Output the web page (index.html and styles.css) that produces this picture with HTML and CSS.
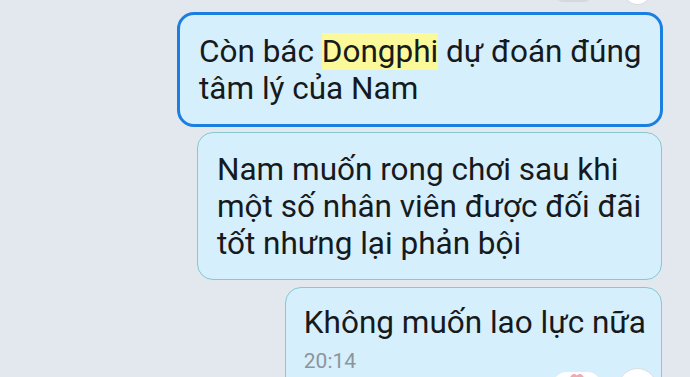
FILE: index.html
```html
<!DOCTYPE html>
<html lang="vi">
<head>
    <meta charset="UTF-8">
    <meta name="viewport" content="width=device-width, initial-scale=1.0">
    <title>Chat</title>
    <link rel="stylesheet" href="styles.css">
</head>
<body>
    <div class="chat">
        <div class="prev-reactions">
            <span class="react-pill react-pill--grey"></span>
            <span class="react-circle"></span>
        </div>

        <div class="bubble bubble--selected">
            <p class="bubble-text">Còn bác <mark class="hl">Dongphi</mark> dự đoán đúng tâm lý của Nam</p>
        </div>

        <div class="bubble bubble--mid">
            <p class="bubble-text">Nam muốn rong chơi sau khi một số nhân viên được đối đãi tốt nhưng lại phản bội</p>
        </div>

        <div class="bubble bubble--last">
            <p class="bubble-text">Không muốn lao lực nữa</p>
            <span class="bubble-time">20:14</span>
            <div class="reactions">
                <span class="react-pill">
                    <svg class="heart" width="14" height="12" viewBox="0 0 14 12"><path d="M7 12 L1.2 6.2 A3.4 3.4 0 0 1 7 1.6 A3.4 3.4 0 0 1 12.8 6.2 Z" fill="#f2a7b1"/></svg>
                </span>
                <span class="react-circle">
                    <svg class="more" width="14" height="8" viewBox="0 0 14 8"><rect x="1" y="2" width="3" height="6" rx="1" fill="#4a4f55"/><rect x="10" y="2" width="3" height="6" rx="1" fill="#4a4f55"/></svg>
                </span>
            </div>
        </div>
    </div>
</body>
</html>
```

FILE: styles.css
```css
* {
    margin: 0;
    padding: 0;
    box-sizing: border-box;
    font-family: Roboto, 'Noto Sans', sans-serif;
}

:root {
    --bg: #e3e7ee;
    --bubble: #d6effc;
    --bubble-border: #86c8cc;
    --selected: #1b7fe2;
    --text: #161a1d;
}

body {
    background: var(--bg);
    color: var(--text);
    height: 377px;
    overflow: hidden;
}

.chat {
    position: relative;
    display: flex;
    flex-direction: column;
    align-items: flex-end;
    padding: 12px 27px 0 0;
}

.prev-reactions {
    position: absolute;
    top: -14px;
    right: 38px;
    display: flex;
    gap: 31px;
    align-items: flex-start;
}

.react-pill {
    display: flex;
    justify-content: center;
    width: 50px;
    height: 30px;
    border-radius: 15px;
    background: #fff;
}

.react-pill--grey {
    width: 37px;
    height: 16px;
    background: #d5d9de;
}

.react-circle {
    display: flex;
    justify-content: center;
    width: 39px;
    height: 39px;
    border-radius: 50%;
    background: #fff;
    border: 1px solid #d9dde2;
}

.prev-reactions .react-circle {
    width: 29px;
    height: 19px;
    border-radius: 0 0 15px 15px;
    border-top: none;
}

.bubble {
    position: relative;
    background: var(--bubble);
    border: 1px solid var(--bubble-border);
    border-radius: 16px;
    padding: 18px 19px 17px 19px;
}

.bubble--selected {
    width: 486px;
    border: 3px solid var(--selected);
    border-radius: 17px;
    padding: 18px 10px 17px 19px;
}

.bubble--mid {
    width: 465px;
    margin: 5px 1px 0 0;
    padding: 18px 12px 17px 19px;
}

.bubble--last {
    margin: 7px 1px 0 0;
    padding: 16px 15px 24px 18px;
}

.bubble-text {
    font-size: 31.5px;
    line-height: 37px;
}

.hl {
    background: #fbf99a;
    color: inherit;
}

.bubble-time {
    display: block;
    font-size: 21px;
    line-height: 24px;
    color: #8c959c;
    margin-top: 8px;
}

.reactions {
    position: absolute;
    right: 4px;
    top: 84px;
    display: flex;
    gap: 16px;
    align-items: flex-start;
}

.reactions .react-circle {
    margin-top: -4px;
}

.heart {
    margin-top: 2px;
}

.more {
    margin-top: 6px;
}
```
